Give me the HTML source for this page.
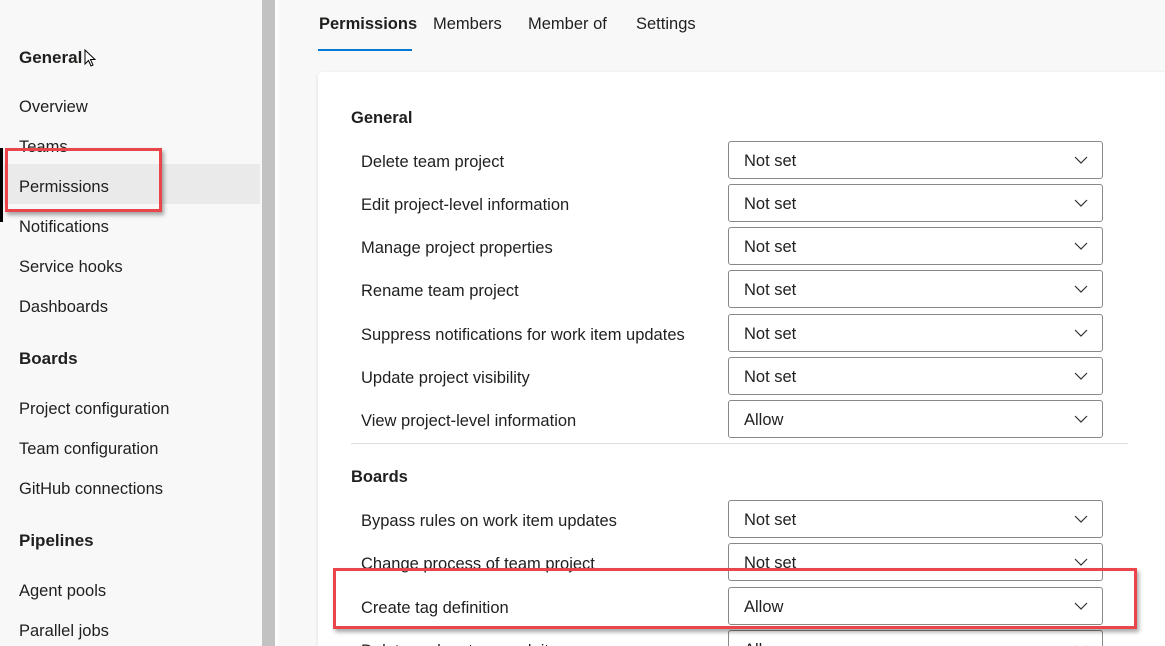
<!DOCTYPE html>
<html style="overflow:hidden;height:646px"><head><style>
body{margin:0;width:1165px;height:646px;overflow:hidden;background:#f8f8f8;font-family:"Liberation Sans",sans-serif;color:#201f1e;position:relative}
.a{position:absolute;white-space:nowrap}
.sb{font-size:16.5px;left:19px}
.h{font-weight:bold;font-size:17px}
.dd{position:absolute;left:728px;width:373px;height:36px;border:1px solid #8a8886;border-radius:3px;background:#fff;font-size:16.5px}
.dd span{position:absolute;left:15px;top:10px}
.dd svg{position:absolute;right:14px;top:14px}
.lbl{position:absolute;left:361px;font-size:16.5px}
.red{position:absolute;border:3px solid #e9454a;box-shadow:2px 3px 4px rgba(0,0,0,.35)}
</style></head><body>
<div class="a" style="left:0;top:0;width:262px;height:646px;background:#f8f8f8"></div>
<div class="a" style="left:4px;top:164px;width:256px;height:40px;background:#eaeaea"></div>
<div class="a" style="left:0;top:148px;width:3px;height:74px;background:#000"></div>
<div class="a" style="left:262px;top:0;width:13px;height:646px;background:#c2c2c2"></div>
<div class="a" style="left:275px;top:0;width:3px;height:646px;background:#fdfdfd"></div>
<div class="a sb h" style="top:48px">General</div>
<div class="a sb" style="top:98px">Overview</div>
<div class="a sb" style="top:138px">Teams</div>
<div class="a sb" style="top:178px">Permissions</div>
<div class="a sb" style="top:218px">Notifications</div>
<div class="a sb" style="top:258px">Service hooks</div>
<div class="a sb" style="top:298px">Dashboards</div>
<div class="a sb h" style="top:349px">Boards</div>
<div class="a sb" style="top:400px">Project configuration</div>
<div class="a sb" style="top:440px">Team configuration</div>
<div class="a sb" style="top:480px">GitHub connections</div>
<div class="a sb h" style="top:531px">Pipelines</div>
<div class="a sb" style="top:582px">Agent pools</div>
<div class="a sb" style="top:622px">Parallel jobs</div>
<div class="red" style="left:5px;top:148px;width:151px;height:58px"></div>
<svg class="a" style="left:84px;top:49px" width="12" height="20"><path d="M1 1 L1 15 L4.5 11.5 L7 17 L9 16 L6.5 10.5 L11 10.5 Z" fill="#fff" stroke="#000" stroke-width="1"/></svg>

<div class="a" style="left:319px;top:15px;font-size:16.5px;font-weight:bold">Permissions</div>
<div class="a" style="left:318px;top:49px;width:94px;height:2px;background:#0078d4"></div>
<div class="a" style="left:433px;top:15px;font-size:16.5px">Members</div>
<div class="a" style="left:528px;top:15px;font-size:16.5px">Member of</div>
<div class="a" style="left:636px;top:15px;font-size:16.5px">Settings</div>

<div class="a" style="left:318px;top:72px;width:860px;height:574px;background:#fff;border-radius:4px 0 0 0;box-shadow:0 1px 3px rgba(0,0,0,.12)"></div>
<div class="a h" style="left:351px;top:109px;font-size:16.5px">General</div>
<div class="a" style="left:351px;top:443px;width:777px;height:1px;background:#e1dfdd"></div>
<div class="a h" style="left:351px;top:468px;font-size:16.5px">Boards</div>

<div class="lbl" style="top:153px">Delete team project</div>
<div class="lbl" style="top:196px">Edit project-level information</div>
<div class="lbl" style="top:239px">Manage project properties</div>
<div class="lbl" style="top:282px">Rename team project</div>
<div class="lbl" style="top:326px">Suppress notifications for work item updates</div>
<div class="lbl" style="top:369px">Update project visibility</div>
<div class="lbl" style="top:412px">View project-level information</div>
<div class="lbl" style="top:512px">Bypass rules on work item updates</div>
<div class="lbl" style="top:555px">Change process of team project</div>
<div class="lbl" style="top:599px">Create tag definition</div>
<div class="lbl" style="top:642px">Delete and restore work items</div>

<div class="dd" style="top:141px"><span>Not set</span><svg width="14" height="8"><path d="M1 1l6 6 6-6" fill="none" stroke="#323130" stroke-width="1.2"/></svg></div>
<div class="dd" style="top:184px"><span>Not set</span><svg width="14" height="8"><path d="M1 1l6 6 6-6" fill="none" stroke="#323130" stroke-width="1.2"/></svg></div>
<div class="dd" style="top:227px"><span>Not set</span><svg width="14" height="8"><path d="M1 1l6 6 6-6" fill="none" stroke="#323130" stroke-width="1.2"/></svg></div>
<div class="dd" style="top:270px"><span>Not set</span><svg width="14" height="8"><path d="M1 1l6 6 6-6" fill="none" stroke="#323130" stroke-width="1.2"/></svg></div>
<div class="dd" style="top:314px"><span>Not set</span><svg width="14" height="8"><path d="M1 1l6 6 6-6" fill="none" stroke="#323130" stroke-width="1.2"/></svg></div>
<div class="dd" style="top:357px"><span>Not set</span><svg width="14" height="8"><path d="M1 1l6 6 6-6" fill="none" stroke="#323130" stroke-width="1.2"/></svg></div>
<div class="dd" style="top:400px"><span>Allow</span><svg width="14" height="8"><path d="M1 1l6 6 6-6" fill="none" stroke="#323130" stroke-width="1.2"/></svg></div>
<div class="dd" style="top:500px"><span>Not set</span><svg width="14" height="8"><path d="M1 1l6 6 6-6" fill="none" stroke="#323130" stroke-width="1.2"/></svg></div>
<div class="dd" style="top:543px"><span>Not set</span><svg width="14" height="8"><path d="M1 1l6 6 6-6" fill="none" stroke="#323130" stroke-width="1.2"/></svg></div>
<div class="dd" style="top:587px"><span>Allow</span><svg width="14" height="8"><path d="M1 1l6 6 6-6" fill="none" stroke="#323130" stroke-width="1.2"/></svg></div>
<div class="dd" style="top:630px"><span>Allow</span><svg width="14" height="8"><path d="M1 1l6 6 6-6" fill="none" stroke="#323130" stroke-width="1.2"/></svg></div>
<div class="red" style="left:333px;top:568px;width:798px;height:55px"></div>
</body></html>
